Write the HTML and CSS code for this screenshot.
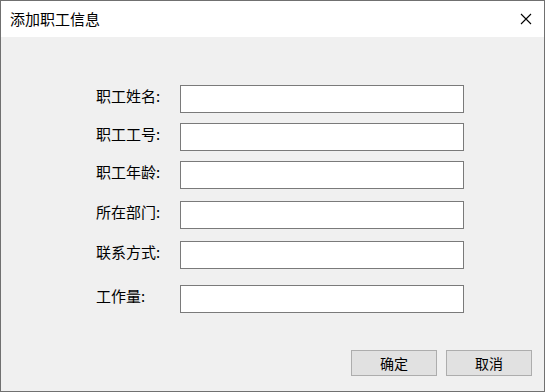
FILE: index.html
```html
<!DOCTYPE html>
<html lang="zh-CN">
<head>
    <meta charset="UTF-8">
    <title>添加职工信息</title>
    <link rel="stylesheet" href="styles.css">
</head>
<body>
    <div class="window">
        <div class="title-bar">
            <span class="title">添加职工信息</span>
            <span class="close">
                <svg width="12" height="12" viewBox="0 0 12 12">
                    <path d="M1 1 L11 11 M11 1 L1 11" stroke="#000" stroke-width="1.1" fill="none"/>
                </svg>
            </span>
        </div>

        <div class="content">
            <div class="form">
                <div class="row">
                    <label>职工姓名:</label>
                    <input type="text">
                </div>
                <div class="row">
                    <label>职工工号:</label>
                    <input type="text">
                </div>
                <div class="row">
                    <label>职工年龄:</label>
                    <input type="text">
                </div>
                <div class="row wide">
                    <label>所在部门:</label>
                    <input type="text">
                </div>
                <div class="row wide">
                    <label>联系方式:</label>
                    <input type="text">
                </div>
                <div class="row wider">
                    <label>工作量:</label>
                    <input type="text">
                </div>
            </div>

            <div class="buttons">
                <button class="btn">确定</button>
                <button class="btn">取消</button>
            </div>
        </div>
    </div>
</body>
</html>
```

FILE: styles.css
```css
:root {
    --frame: #707070;
    --panel: #f0f0f0;
    --field-border: #7a7a7a;
    --btn-bg: #e1e1e1;
    --btn-border: #adadad;
}

* {
    box-sizing: border-box;
}

body {
    margin: 0;
    font-family: "Noto Sans CJK SC", "Noto Sans", sans-serif;
    color: #000;
    background: #fff;
}

.window {
    width: 545px;
    height: 392px;
    border: 1px solid var(--frame);
    display: flex;
    flex-direction: column;
    background: var(--panel);
}

.title-bar {
    height: 36px;
    background: #fff;
    display: flex;
    align-items: center;
    justify-content: space-between;
    padding: 0 12px 0 9px;
}

.title {
    font-size: 15px;
    line-height: 20px;
}

.close {
    display: flex;
    width: 12px;
    height: 12px;
}

.content {
    flex: 1;
    padding: 48px 12px 0 95px;
}

.form {
    display: flex;
    flex-direction: column;
}

.row {
    display: flex;
    align-items: flex-start;
    margin-bottom: 10px;
}

.row.wide {
    margin-top: 2px;
}

.row.wider {
    margin-top: 6px;
}

.row label {
    width: 84px;
    font-size: 15px;
    line-height: 22px;
}

.row input {
    width: 284px;
    height: 28px;
    margin: 0;
    border: 1px solid var(--field-border);
    background: #fff;
    padding: 0 4px;
    font: inherit;
    outline: none;
}

.buttons {
    display: flex;
    justify-content: flex-end;
    gap: 9px;
    margin-top: 27px;
}

.btn {
    width: 86px;
    height: 26px;
    background: var(--btn-bg);
    border: 1px solid var(--btn-border);
    font-family: inherit;
    font-size: 14px;
    padding: 0;
    color: #000;
}
```
